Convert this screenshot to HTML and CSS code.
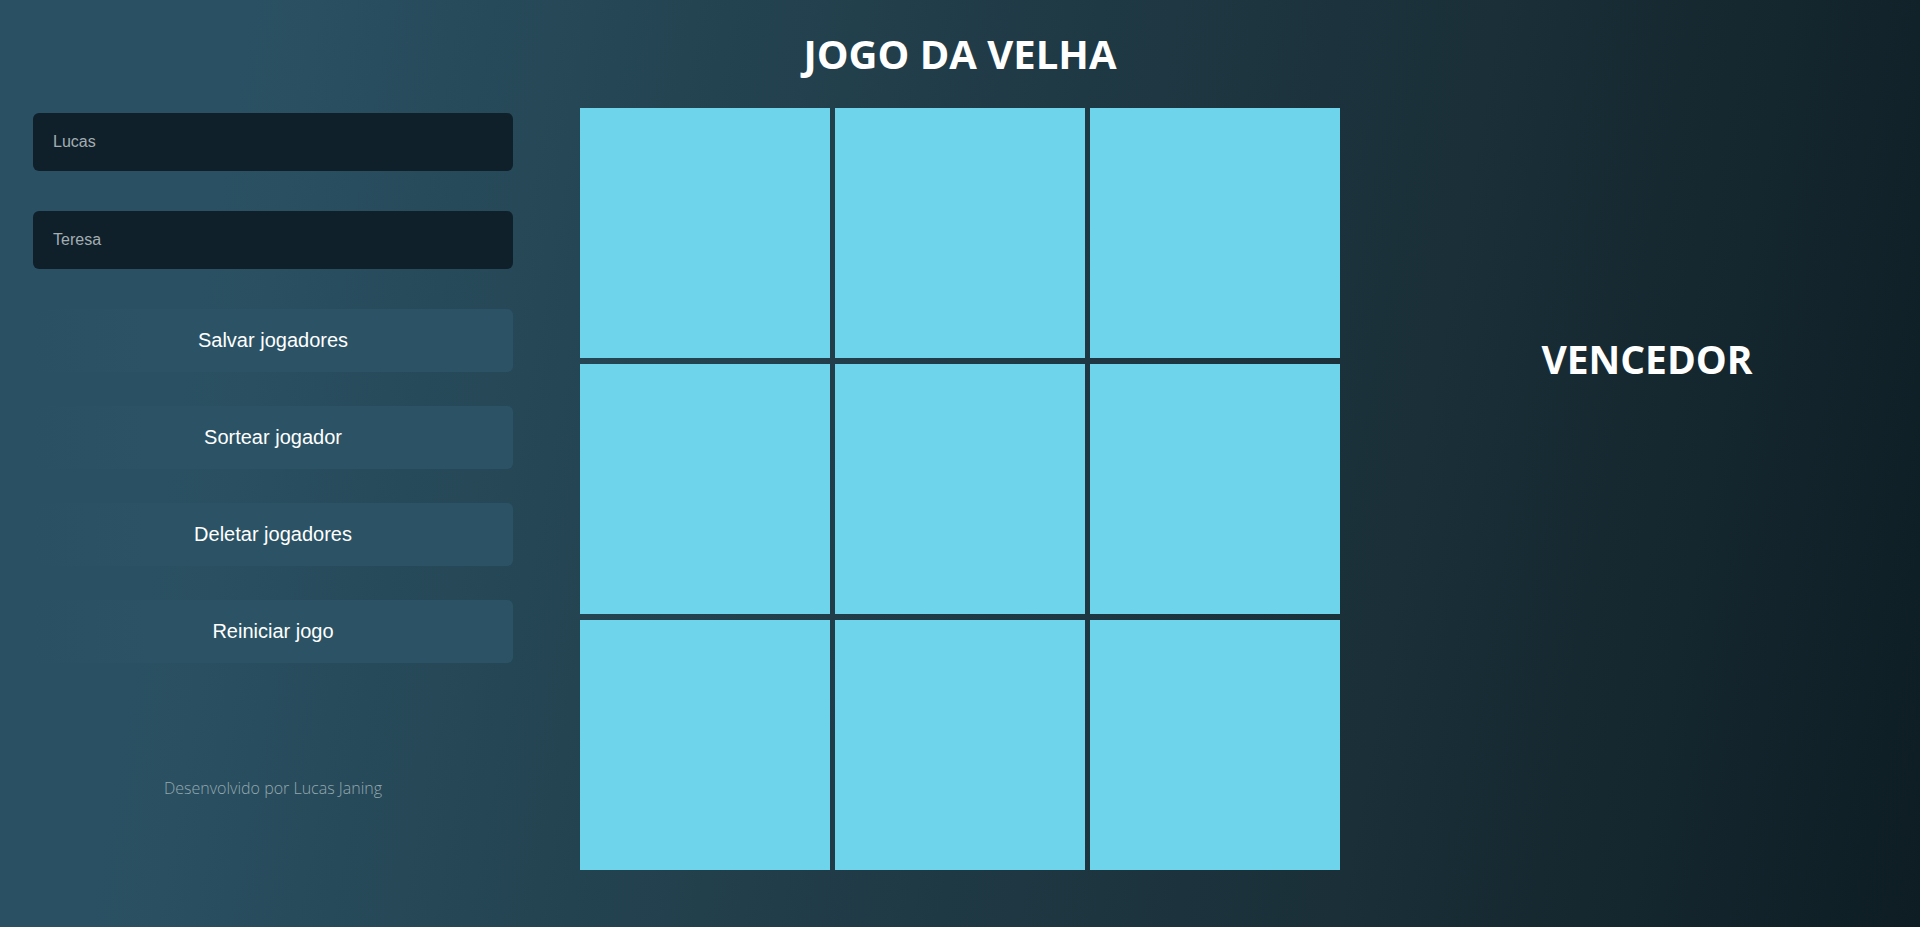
FILE: index.html
```html
<!DOCTYPE html>
<html lang="pt-BR">
<head>
<meta charset="utf-8">
<title>Jogo da Velha</title>
<link rel="stylesheet" href="styles.css">
</head>
<body>
  <h1 class="title">JOGO DA VELHA</h1>
  <main class="layout">
    <section class="panel">
      <input class="field" type="text" placeholder="Lucas">
      <input class="field" type="text" placeholder="Teresa">
      <div class="actions">
        <button class="btn">Salvar jogadores</button>
        <button class="btn">Sortear jogador</button>
        <button class="btn">Deletar jogadores</button>
        <button class="btn">Reiniciar jogo</button>
      </div>
      <p class="credit">Desenvolvido por Lucas Janing</p>
    </section>
    <section class="board">
      <div class="cell"></div>
      <div class="cell"></div>
      <div class="cell"></div>
      <div class="cell"></div>
      <div class="cell"></div>
      <div class="cell"></div>
      <div class="cell"></div>
      <div class="cell"></div>
      <div class="cell"></div>
    </section>
    <section class="result">
      <h2 class="winner">VENCEDOR</h2>
    </section>
  </main>
</body>
</html>
```

FILE: styles.css
```css
* {
  box-sizing: border-box;
}

html, body {
  margin: 0;
  height: 100%;
}

body {
  width: 1920px;
  height: 927px;
  overflow: hidden;
  background: linear-gradient(100deg, #2a5163 12%, #213d49 45%, #1a2f38 72%, #0e1d24 100%);
  font-family: "Open Sans", sans-serif;
  color: #ffffff;
}

.title {
  margin: 0;
  padding-top: 27px;
  text-align: center;
  font-family: "Open Sans", sans-serif;
  font-weight: 700;
  font-size: 40px;
  line-height: 54px;
  height: 108px;
}

.layout {
  display: flex;
  align-items: flex-start;
}

.panel {
  width: 480px;
  margin-left: 33px;
  padding-top: 5px;
  display: flex;
  flex-direction: column;
}

.field {
  display: block;
  width: 100%;
  height: 58px;
  border: none;
  border-radius: 6px;
  background: #10202a;
  padding: 0 20px;
  margin-bottom: 40px;
  font-family: "Liberation Sans", Arial, sans-serif;
  font-size: 16px;
  color: #ffffff;
  outline: none;
}

.field::placeholder {
  color: #a3aeb3;
}

.actions {
  display: flex;
  flex-direction: column;
  gap: 34px;
}

.btn {
  display: block;
  width: 100%;
  height: 63px;
  border: none;
  border-radius: 0 6px 6px 0;
  background: linear-gradient(90deg, rgba(43, 83, 101, 0) 0%, #2b5365 24%, #2b5365 100%);
  font-family: "Liberation Sans", Arial, sans-serif;
  font-size: 20px;
  color: #ffffff;
  cursor: pointer;
}

.credit {
  margin: 114px 0 0;
  text-align: center;
  font-family: "Open Sans", sans-serif;
  font-weight: 300;
  font-size: 16px;
  line-height: 22px;
  color: #94a8b0;
}

.board {
  margin-left: 67px;
  display: grid;
  grid-template-columns: repeat(3, 250px);
  grid-template-rows: repeat(3, 250px);
  gap: 6px 5px;
}

.cell {
  background: #6dd4eb;
}

.result {
  flex: 1;
  padding-left: 34px;
  padding-top: 226px;
  text-align: center;
}

.winner {
  margin: 0;
  font-family: "Open Sans", sans-serif;
  font-weight: 700;
  font-size: 39px;
  line-height: 50px;
}
```
